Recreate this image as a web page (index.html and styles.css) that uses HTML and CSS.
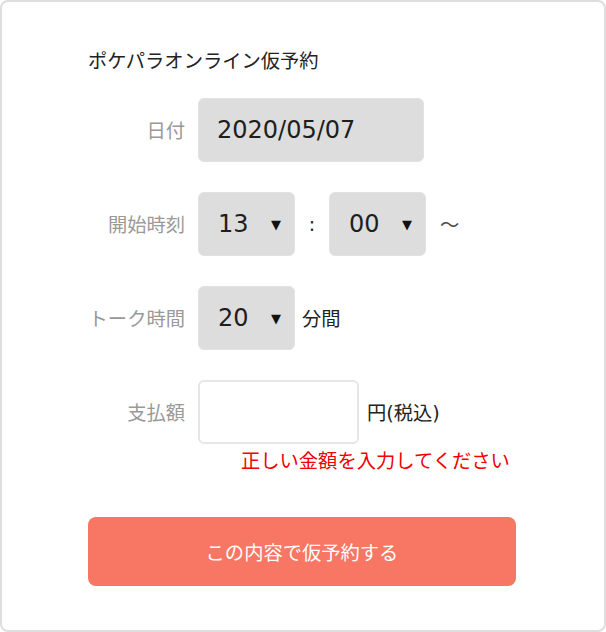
FILE: index.html
```html
<!DOCTYPE html>
<html lang="ja">
<head>
<meta charset="utf-8">
<title>ポケパラオンライン仮予約</title>
<link rel="stylesheet" href="styles.css">
</head>
<body>
<div class="card">
  <h1 class="title">ポケパラオンライン仮予約</h1>
  <div class="row">
    <div class="label">日付</div>
    <div class="field date">2020/05/07</div>
  </div>
  <div class="row">
    <div class="label">開始時刻</div>
    <div class="field select"><span class="val">13</span><span class="arrow">▼</span></div>
    <span class="colon">:</span>
    <div class="field select"><span class="val">00</span><span class="arrow">▼</span></div>
    <span class="tilde">～</span>
  </div>
  <div class="row">
    <div class="label">トーク時間</div>
    <div class="field select"><span class="val">20</span><span class="arrow">▼</span></div>
    <span class="unit">分間</span>
  </div>
  <div class="row row-last">
    <div class="label">支払額</div>
    <div class="field amount"></div>
    <span class="unit unit-yen">円(税込)</span>
  </div>
  <div class="error">正しい金額を入力してください</div>
  <button class="submit" type="button">この内容で仮予約する</button>
</div>
</body>
</html>
```
FILE: styles.css
```css
html, body {
  margin: 0;
  padding: 0;
  background: #fff;
}
body {
  font-family: "DejaVu Sans", "Noto Sans CJK JP", sans-serif;
  color: #222;
}
.card {
  box-sizing: border-box;
  width: 606px;
  height: 632px;
  border: 2px solid #dedede;
  border-radius: 8px;
  padding: 48px 88px 0 86px;
}
.title {
  margin: 0 0 24px;
  font-size: 19.3px;
  font-weight: normal;
  line-height: 24px;
  color: #222;
}
.row {
  display: flex;
  align-items: center;
  height: 64px;
  margin-bottom: 30px;
  font-size: 19.3px;
}
.row-last {
  margin-bottom: 0;
}
.label {
  width: 97px;
  margin-right: 13px;
  text-align: right;
  color: #999;
  flex: none;
}
.field {
  box-sizing: border-box;
  height: 64px;
  border-radius: 6px;
  display: flex;
  align-items: center;
  flex: none;
}
.date {
  width: 226px;
  background: #dddddd;
  border: 1px solid #e2e2e2;
  padding-left: 18px;
  font-size: 24px;
  color: #1e1e1e;
}
.select {
  width: 97px;
  background: #dddddd;
  border: 1px solid #e2e2e2;
  padding: 0 13px 0 19px;
  justify-content: space-between;
  font-size: 24px;
  color: #1e1e1e;
}
.arrow {
  font-size: 13px;
  color: #111;
}
.colon {
  width: 34px;
  text-align: center;
  font-size: 19px;
  color: #222;
}
.tilde {
  margin-left: 14px;
  color: #444;
}
.unit {
  margin-left: 7px;
  color: #222;
}
.unit-yen {
  margin-left: 8px;
}
.amount {
  width: 161px;
  background: #fff;
  border: 2px solid #e6e6e6;
}
.error {
  margin: 6px 0 0 153px;
  font-size: 19.3px;
  line-height: 24px;
  color: #f00000;
}
.submit {
  display: block;
  box-sizing: border-box;
  width: 428px;
  height: 69px;
  margin: 43px 0 0 0;
  border: none;
  border-radius: 8px;
  background: #f77664;
  color: #fff;
  font-family: "Noto Sans CJK JP", sans-serif;
  font-size: 19.3px;
  padding: 0;
}
```
